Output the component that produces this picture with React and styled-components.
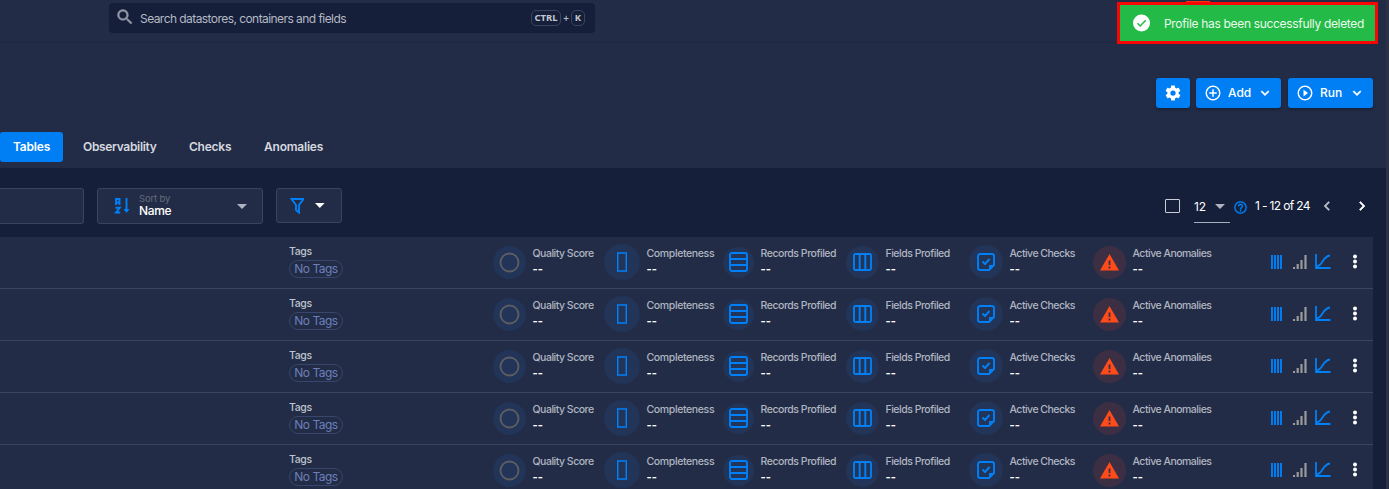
import React from "react";
import styled, { createGlobalStyle } from "styled-components";

const Global = createGlobalStyle`
  * { box-sizing: border-box; }
  body { margin: 0; background: #151f3a; overflow: hidden; }
`;

const Page = styled.div`
  position: relative;
  width: 1389px;
  height: 489px;
  overflow: hidden;
  display: flex;
  font-family: Inter, "Liberation Sans", sans-serif;
  color: #fff;
  background: #151f3a;
`;
const Main = styled.div`
  width: 1386px;
  flex: none;
`;
const Gutter = styled.div`
  flex: 1;
  background: #2c3347;
`;

const Text = styled.span`
  display: block;
  white-space: nowrap;
  font-size: ${(p) => p.$size || 12}px;
  line-height: ${(p) => p.$line || 16}px;
  letter-spacing: ${(p) => p.$track || 0}px;
  font-weight: ${(p) => p.$weight || 400};
  color: ${(p) => p.$color || "#fff"};
`;

const TopBar = styled.header`
  height: 43px;
  padding: 3px 0 0 109px;
  background: #222c47;
  border-bottom: 1px solid #1f2840;
`;
const Search = styled.div`
  width: 486px;
  height: 30px;
  display: flex;
  align-items: center;
  padding: 0 10px 2px 6px;
  border-radius: 4px;
  background: #151f3a;
`;
const SearchLabel = styled(Text)`
  flex: 1;
  margin: 4px 0 0 5px;
`;
const Key = styled.kbd`
  height: 16px;
  width: ${(p) => p.$w}px;
  margin-top: 2px;
  border: 1px solid #3b445c;
  border-radius: 5px;
  font: 700 9.5px/14px "Noto Sans", sans-serif;
  text-align: center;
  color: #c3c7d0;
`;
const Plus = styled.span`
  width: 10px;
  margin-top: 2px;
  text-align: center;
  font: 600 10px/14px "Noto Sans", sans-serif;
  color: #b4b9c4;
`;

const Hero = styled.section`
  height: 125px;
  background: #222c47;
  padding-top: 35px;
`;
const Actions = styled.div`
  display: flex;
  justify-content: flex-end;
  padding-right: 13px;
`;
const Button = styled.button`
  height: 30px;
  width: ${(p) => p.$w}px;
  margin-left: ${(p) => p.$gap || 0}px;
  padding: 0 ${(p) => p.$pad}px;
  display: flex;
  align-items: center;
  border: 0;
  border-radius: 3px;
  background: #007ff5;
  font-family: inherit;
  box-shadow: 0 2px 3px rgba(0, 0, 0, 0.25);
`;
const ButtonText = styled(Text)`
  flex: 1;
  text-align: left;
  margin-left: 6px;
`;

const Tabs = styled.nav`
  display: flex;
  margin-top: 24px;
`;
const Tab = styled.div`
  height: 30px;
  width: ${(p) => p.$w}px;
  padding: 7px 0 0 ${(p) => p.$pad}px;
  border-radius: 3px;
  background: ${(p) => (p.$active ? "#007ff5" : "transparent")};
`;

const Toolbar = styled.section`
  height: 69px;
  display: flex;
  padding-top: 20px;
`;
const Field = styled.div`
  height: ${(p) => p.$h || 36}px;
  width: ${(p) => p.$w}px;
  margin-left: ${(p) => p.$gap || 0}px;
  padding: 0 ${(p) => p.$padRight || 16}px 0 ${(p) => p.$padLeft || 16}px;
  display: flex;
  align-items: center;
  border: 1px solid #3b445c;
  border-radius: 3px;
  background: #222c47;
`;
const OpenField = styled(Field)`
  border-left: 0;
  border-radius: 0 3px 3px 0;
`;
const SortText = styled.div`
  flex: 1;
  margin-left: 8px;
`;
const FilterIcon = styled.svg`
  display: block;
  margin-right: 11px;
`;
const Pager = styled.div`
  flex: 1;
  display: flex;
  justify-content: flex-end;
  align-items: flex-start;
  padding: 0 15px 0 0;
`;
const Checkbox = styled.span`
  width: 15px;
  height: 14px;
  margin: 11px 14px 0 0;
  border: 1px solid #c9ccd4;
  border-radius: 1px;
`;
const PageSize = styled.div`
  width: 36px;
  height: 35px;
  display: flex;
  align-items: center;
  justify-content: space-between;
  padding: 3px 5px 0 0;
  border-bottom: 1px solid #a9aebb;
`;
const PagerItem = styled.span`
  display: block;
  width: ${(p) => p.$w}px;
  height: 36px;
  padding-top: ${(p) => p.$top}px;
  margin-left: ${(p) => p.$gap}px;
  svg { display: block; }
`;

const Rows = styled.div`
  width: 1373px;
`;
const Row = styled.div`
  height: 52px;
  display: flex;
  align-items: flex-start;
  padding-left: 289px;
  background: #222c47;
  border-bottom: 1px solid #3b4560;
`;
const Tags = styled.div`
  width: 204px;
  padding-top: 8px;
`;
const NoTags = styled.span`
  display: flex;
  justify-content: center;
  width: 54px;
  height: 18px;
  margin-top: 1px;
  border: 1px solid #38466b;
  border-radius: 9px;
`;
const Metric = styled.div`
  width: ${(p) => p.$w}px;
  height: 50px;
  display: flex;
  align-items: center;
`;
const Bubble = styled.span`
  width: ${(p) => p.$d}px;
  height: ${(p) => p.$d}px;
  flex: none;
  display: flex;
  align-items: center;
  justify-content: center;
  border-radius: 50%;
  background: ${(p) => (p.$alert ? "#3d2f43" : "#223457")};
`;
const MetricText = styled.div`
  margin: -1px 0 0 6.500px;
`;
const Dashes = styled(Text)`
  margin-top: 1px;
`;
const RowTools = styled.div`
  flex: 1;
  height: 49px;
  display: flex;
  align-items: center;
  justify-content: flex-end;
  padding-right: 13px;
`;
const Tool = styled.svg`
  display: block;
  margin-left: ${(p) => p.$gap || 0}px;
`;

const Toast = styled.div`
  position: absolute;
  left: 1117px;
  top: 2px;
  width: 261px;
  height: 42px;
  display: flex;
  align-items: center;
  padding: 0 0 0 13px;
  border: 3px solid #f90505;
  background: #24ba48;
`;
const ToastText = styled(Text)`
  margin: 2px 0 0 14px;
`;
const Notch = styled.span`
  position: absolute;
  left: 1186px;
  top: 1px;
  width: 24px;
  height: 2px;
  background: #f9310c;
`;

const Icon = ({ d, size, color = "#fff", bold = 0 }) => (
  <svg width={size} height={size} viewBox="0 0 24 24" fill={color} stroke={color} strokeWidth={bold}>
    <path d={d} />
  </svg>
);
const SEARCH = "M9.5 3A6.5 6.5 0 0 1 16 9.500c0 1.610-.590 3.090-1.560 4.230l.270.270h.790l5 5-1.500 1.500-5-5v-.790l-.270-.270A6.516 6.516 0 0 1 9.500 16a6.500 6.500 0 1 1 0-13m0 2C7 5 5 7 5 9.500S7 14 9.500 14 14 12 14 9.500 12 5 9.500 5Z";
const COG = "M12 15.500A3.500 3.500 0 0 1 8.500 12 3.500 3.500 0 0 1 12 8.500a3.500 3.500 0 0 1 3.500 3.500 3.500 3.500 0 0 1-3.500 3.500m7.430-2.530c.04-.32.07-.64.07-.97s-.03-.66-.07-1l2.110-1.630c.19-.15.24-.42.12-.64l-2-3.460c-.12-.22-.39-.31-.61-.22l-2.490 1c-.52-.39-1.060-.73-1.690-.98l-.37-2.650A.506.506 0 0 0 14 2h-4c-.25 0-.46.18-.5.42l-.37 2.650c-.63.25-1.170.59-1.690.98l-2.490-1c-.22-.09-.49 0-.61.22l-2 3.460c-.13.22-.07.49.12.64L4.570 11c-.04.34-.07.67-.07 1s.03.65.07.97l-2.110 1.660c-.19.15-.25.42-.12.64l2 3.460c.12.22.39.3.61.22l2.490-1.010c.52.4 1.060.74 1.690.99l.37 2.650c.04.24.25.42.5.42h4c.25 0 .46-.18.5-.42l.37-2.650c.63-.26 1.170-.59 1.690-.99l2.490 1.010c.22.08.49 0 .61-.22l2-3.460c.12-.22.07-.49-.12-.64l-2.110-1.660Z";
const PLUS_CIRCLE = "M12 20c-4.410 0-8-3.590-8-8s3.590-8 8-8 8 3.590 8 8-3.590 8-8 8m0-18A10 10 0 0 0 2 12a10 10 0 0 0 20 0A10 10 0 0 0 12 2m1 5h-2v4H7v2h4v4h2v-4h4v-2h-4V7Z";
const PLAY_CIRCLE = "M12 20c-4.410 0-8-3.590-8-8s3.590-8 8-8 8 3.590 8 8-3.590 8-8 8m0-18A10 10 0 0 0 2 12a10 10 0 0 0 20 0A10 10 0 0 0 12 2m-2 14.500 6-4.500-6-4.500v9Z";
const CHEVRON_DOWN = "M7.410 8.580 12 13.170l4.590-4.590L18 10l-6 6-6-6 1.410-1.420Z";
const CHEVRON_LEFT = "M15.410 16.580 10.830 12l4.580-4.590L14 6l-6 6 6 6 1.410-1.420Z";
const CHEVRON_RIGHT = "M8.590 16.580 13.170 12 8.590 7.410 10 6l6 6-6 6-1.410-1.420Z";
const HELP = "M11 18h2v-2h-2v2m1-16A10 10 0 0 0 2 12a10 10 0 0 0 20 0A10 10 0 0 0 12 2m0 18c-4.410 0-8-3.590-8-8s3.590-8 8-8 8 3.590 8 8-3.590 8-8 8m0-14a4 4 0 0 0-4 4h2a2 2 0 1 1 4 0c0 2-3 1.750-3 5h2c0-2.250 3-2.500 3-5a4 4 0 0 0-4-4Z";

const Caret = ({ color }) => (
  <svg width="10" height="5" viewBox="0 0 10 5"><path d="M0 0h10L5 5Z" fill={color} /></svg>
);
const BLUE = "#0080f7";

const icons = {
  ring: <svg width="21" height="21"><circle cx="10.500" cy="10.500" r="9" fill="none" stroke="#5c5d63" strokeWidth="1.900" /></svg>,
  bar: <svg width="10" height="20"><path d="M.7 1h8.600v18H.7Z" fill="none" stroke={BLUE} strokeWidth="1.500" /></svg>,
  records: <svg width="19" height="20"><path d="M3 1h13a2 2 0 0 1 2 2v14a2 2 0 0 1-2 2H3a2 2 0 0 1-2-2V3a2 2 0 0 1 2-2ZM1 7h17M1 13h17" fill="none" stroke={BLUE} strokeWidth="1.900" /></svg>,
  fields: <svg width="19" height="18"><path d="M2.500 1h14A1.500 1.500 0 0 1 18 2.500v13a1.500 1.500 0 0 1-1.500 1.500h-14A1.500 1.500 0 0 1 1 15.500v-13A1.500 1.500 0 0 1 2.500 1ZM6.700 1v16M12.300 1v16" fill="none" stroke={BLUE} strokeWidth="1.900" /></svg>,
  checks: <svg width="18" height="18"><path d="M3 1h12a2 2 0 0 1 2 2v9l-5 5H3a2 2 0 0 1-2-2V3a2 2 0 0 1 2-2Z" fill="none" stroke={BLUE} strokeWidth="1.900" /><path d="M12 17v-5h5Z" fill={BLUE} /><path d="m5.500 8.500 2.500 2.500 4.500-5" fill="none" stroke={BLUE} strokeWidth="1.900" /></svg>,
  alert: <svg width="19" height="17"><path d="M9.500 0 19 16.500H0Z" fill="#ff4b19" /><path d="M8.600 6.500h1.800v4.500H8.600Zm0 6h1.800v2H8.600Z" fill="#3d2f43" /></svg>,
};
const metrics = [
  ["Quality Score", "ring", 111, 33, -0.49],
  ["Completeness", "bar", 119, 36, -0.37],
  ["Records Profiled", "records", 123, 31, -0.46],
  ["Fields Profiled", "fields", 123, 33, -0.48],
  ["Active Checks", "checks", 124, 34, -0.52],
  ["Active Anomalies", "alert", 120, 33, -0.5],
];

function TableRow() {
  return (
    <Row>
      <Tags>
        <Text $size={10.5} $line={14} $track={-0.35} $weight={500} $color="#bfc3cc">Tags</Text>
        <NoTags><Text $size={12} $track={-0.5} $color="#6d7fb8">No Tags</Text></NoTags>
      </Tags>
      {metrics.map(([label, icon, w, d, track]) => (
        <Metric key={label} $w={w}>
          <Bubble $d={d} $alert={icon === "alert"}>{icons[icon]}</Bubble>
          <MetricText>
            <Text $size={10.5} $line={14} $track={track} $weight={500} $color="#b0b5c0">{label}</Text>
            <Dashes $size={11} $line={15} $weight={700}>--</Dashes>
          </MetricText>
        </Metric>
      ))}
      <RowTools>
        <Tool width="11" height="14"><path d="M1 0v14M4 0v14M7 0v14M10 0v14" stroke={BLUE} strokeWidth="1.900" /></Tool>
        <Tool width="14" height="14" $gap={11}><path d="M1 12v2M4.700 9v5M8.500 5v9M12.500 0v14" stroke="#999a99" strokeWidth="2.200" /></Tool>
        <Tool width="16" height="15" $gap={8}><path d="M1 0v14h14.500M1.500 12.500C8 12 7 2.500 15 1.500" fill="none" stroke={BLUE} strokeWidth="1.800" /></Tool>
        <Tool width="10" height="15" $gap={19}><g fill="#fff"><circle cx="5" cy="2.500" r="2" /><circle cx="5" cy="7.500" r="2" /><circle cx="5" cy="12.500" r="2" /></g></Tool>
      </RowTools>
    </Row>
  );
}

export default function App() {
  return (
    <Page>
      <Global />
      <Main>
        <TopBar>
          <Search>
            <Icon d={SEARCH} size={20} color="#9298a6" bold={0.6} />
            <SearchLabel $size={12} $track={-0.56} $color="#b4b9c4">Search datastores, containers and fields</SearchLabel>
            <Key $w={30}>CTRL</Key><Plus>+</Plus><Key $w={14}>K</Key>
          </Search>
        </TopBar>
        <Hero>
          <Actions>
            <Button $w={34} $pad={8}><Icon d={COG} size={18} /></Button>
            <Button $w={85} $pad={8} $gap={6}>
              <Icon d={PLUS_CIRCLE} size={18} />
              <ButtonText $size={12} $weight={500}>Add</ButtonText>
              <Icon d={CHEVRON_DOWN} size={16} bold={0.8} />
            </Button>
            <Button $w={85} $pad={8} $gap={7}>
              <Icon d={PLAY_CIRCLE} size={18} />
              <ButtonText $size={12} $weight={500}>Run</ButtonText>
              <Icon d={CHEVRON_DOWN} size={16} bold={0.8} />
            </Button>
          </Actions>
          <Tabs>
            <Tab $active $w={63} $pad={13}><Text $size={12} $weight={600} $track={-0.2}>Tables</Text></Tab>
            <Tab $w={107} $pad={20}><Text $size={12} $weight={600} $track={-0.32} $color="#d5d8df">Observability</Text></Tab>
            <Tab $w={75} $pad={19}><Text $size={12} $weight={600} $track={-0.24} $color="#d5d8df">Checks</Text></Tab>
            <Tab $w={90} $pad={19}><Text $size={12} $weight={600} $track={-0.22} $color="#d5d8df">Anomalies</Text></Tab>
          </Tabs>
        </Hero>
        <Toolbar>
          <OpenField $w={84} />
          <Field $w={166} $gap={13} $padRight={15}>
            <svg width="17" height="16" fill="none" stroke={BLUE} strokeWidth="1.900">
              <path d="M2 7V1h3.500v6M2 4.500h3.500M1.500 9.800h4.300L2 14.500H6.300M12.500 0v13" />
              <path d="M9.500 11h6l-3 4Z" fill={BLUE} stroke="none" />
            </svg>
            <SortText>
              <Text $size={9.5} $line={10} $track={-0.15} $color="#666b7c">Sort by</Text>
              <Text $size={12} $line={14} $track={-0.35} $weight={500}>Name</Text>
            </SortText>
            <Caret color="#aeb3bf" />
          </Field>
          <Field $w={66} $gap={13} $h={35} $padLeft={13}>
            <FilterIcon width="15" height="16"><path d="M1.500 1h12L9 7v7.500l-3-2.500V7Z" fill="none" stroke={BLUE} strokeWidth="1.900" /></FilterIcon>
            <Caret color="#fff" />
          </Field>
          <Pager>
            <Checkbox />
            <PageSize>
              <Text $size={12} $track={-0.2}>12</Text>
              <Caret color="#aeb3bf" />
            </PageSize>
            <PagerItem $w={15} $gap={3} $top={12}><Icon d={HELP} size={15} color={BLUE} bold={0.4} /></PagerItem>
            <PagerItem $w={54} $gap={7} $top={10}><Text $size={12} $track={-0.65}>1 - 12 of 24</Text></PagerItem>
            <PagerItem $w={18} $gap={9} $top={9}><Icon d={CHEVRON_LEFT} size={18} color="#b5b9c4" bold={0.8} /></PagerItem>
            <PagerItem $w={18} $gap={17} $top={9}><Icon d={CHEVRON_RIGHT} size={18} bold={0.8} /></PagerItem>
          </Pager>
        </Toolbar>
        <Rows>
          {[0, 1, 2, 3, 4].map((i) => <TableRow key={i} />)}
        </Rows>
      </Main>
      <Gutter />
      <Notch />
      <Toast>
        <svg width="17" height="18"><circle cx="8.500" cy="9" r="8.500" fill="#fff" /><path d="m4.500 9.300 2.700 2.700 5.500-5.800" fill="none" stroke="#24ba48" strokeWidth="1.500" /></svg>
        <ToastText $size={12} $track={-0.32} $color="#e9f9ec">Profile has been successfully deleted</ToastText>
      </Toast>
    </Page>
  );
}
